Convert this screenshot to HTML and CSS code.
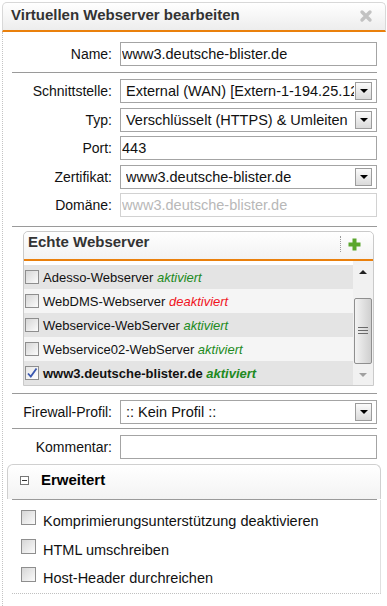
FILE: index.html
```html
<!DOCTYPE html>
<html lang="de">
<head>
  <meta charset="UTF-8">
  <title>Virtuellen Webserver bearbeiten</title>
  <link rel="stylesheet" href="styles.css">
</head>
<body>
  <div class="dialog">
    <div class="dialog-head">
      <span class="dialog-title">Virtuellen Webserver bearbeiten</span>
      <svg class="close" width="14" height="14" viewBox="0 0 14 14">
        <path d="M3 3 L11 11 M11 3 L3 11" stroke="#c2c2c2" stroke-width="3.4" stroke-linecap="round" fill="none"/>
      </svg>
    </div>

    <div class="dialog-body">
      <div class="form-grid">
        <label>Name:</label>
        <input class="field" type="text" value="www3.deutsche-blister.de">
      </div>

      <hr class="sep">

      <div class="form-grid">
        <label>Schnittstelle:</label>
        <div class="select"><span class="value">External (WAN) [Extern-1-194.25.12.80]</span><span class="arrow"></span></div>

        <label>Typ:</label>
        <div class="select"><span class="value">Verschlüsselt (HTTPS) &amp; Umleiten</span><span class="arrow"></span></div>

        <label>Port:</label>
        <input class="field" type="text" value="443">

        <label>Zertifikat:</label>
        <div class="select"><span class="value">www3.deutsche-blister.de</span><span class="arrow"></span></div>

        <label>Domäne:</label>
        <input class="field" type="text" value="www3.deutsche-blister.de" disabled>
      </div>

      <hr class="sep sep-before-panel">

      <div class="panel servers">
        <div class="panel-head">
          <span class="panel-title">Echte Webserver</span>
          <span class="panel-tools">
            <svg class="plus" width="15" height="15" viewBox="0 0 15 15">
              <path d="M7.5 1.5 V13.5 M1.5 7.5 H13.5" stroke="#5aa62c" stroke-width="4" fill="none"/>
            </svg>
          </span>
        </div>
        <div class="server-list">
          <div class="rows">
            <div class="row odd"><span class="cb"></span>Adesso-Webserver <em class="on">aktiviert</em></div>
            <div class="row"><span class="cb"></span>WebDMS-Webserver <em class="off">deaktiviert</em></div>
            <div class="row odd"><span class="cb"></span>Webservice-WebServer <em class="on">aktiviert</em></div>
            <div class="row"><span class="cb"></span>Webservice02-WebServer <em class="on">aktiviert</em></div>
            <div class="row odd selected">
              <span class="cb checked">
                <svg width="12" height="12" viewBox="0 0 12 12"><path d="M2 6.5 L4.8 9.5 L10.5 1.5" stroke="#3a58b0" stroke-width="1.8" fill="none"/></svg>
              </span>www3.deutsche-blister.de <em class="on">aktiviert</em>
            </div>
          </div>
          <div class="scrollbar">
            <span class="sb-btn"><span class="tri-up"></span></span>
            <span class="thumb">
              <svg width="10" height="8" viewBox="0 0 10 8"><path d="M0 0.5 H10 M0 3.5 H10 M0 6.5 H10" stroke="#6a6a6a" stroke-width="1"/></svg>
            </span>
            <span class="sb-btn sb-down"><span class="tri-down"></span></span>
          </div>
        </div>
      </div>

      <hr class="sep sep-after-panel">

      <div class="form-grid">
        <label>Firewall-Profil:</label>
        <div class="select"><span class="value">:: Kein Profil ::</span><span class="arrow"></span></div>
      </div>

      <hr class="sep sep-tight">

      <div class="form-grid">
        <label>Kommentar:</label>
        <input class="field" type="text" value="">
      </div>

      <div class="advanced">
        <div class="adv-head">
          <span class="toggle"></span>
          <span class="adv-title">Erweitert</span>
        </div>
        <div class="adv-line"></div>
        <div class="adv-body">
          <div class="option"><span class="cb big"></span><span class="opt-text">Komprimierungsunterstützung deaktivieren</span></div>
          <div class="option"><span class="cb big"></span><span class="opt-text">HTML umschreiben</span></div>
          <div class="option"><span class="cb big"></span><span class="opt-text">Host-Header durchreichen</span></div>
        </div>
      </div>
    </div>
  </div>
</body>
</html>
```

FILE: styles.css
```css
body {
  margin: 0;
  font-family: "Liberation Sans", Arial, sans-serif;
  background-color: #fff;
  color: #111;
}

.dialog {
  width: 384px;
  margin-left: 2px;
}

.dialog-head {
  margin-top: 2px;
  height: 27px;
  border: 1px solid #d8d8d8;
  border-bottom: 2px solid #ea800c;
  border-radius: 5px 5px 0 0;
  background: linear-gradient(#ffffff, #ededed);
  display: flex;
  justify-content: space-between;
  align-items: flex-start;
  padding: 0 12px 0 8px;
}

.dialog-title {
  padding-top: 3px;
  line-height: 18px;
  font-size: 15px;
  font-weight: bold;
  color: #333;
}

.close {
  margin-top: 6px;
}

.dialog-body {
  box-sizing: border-box;
  min-height: 574px;
  border-left: 1px dotted #c4c4c4;
  padding: 10px 9px 0 9px;
}

.form-grid {
  display: grid;
  grid-template-columns: 100px minmax(0, 1fr);
  column-gap: 8px;
  row-gap: 4.5px;
  align-items: center;
}

.form-grid label {
  text-align: right;
  font-size: 14px;
}

.field, .select {
  box-sizing: border-box;
  height: 24px;
  border: 1px solid #a4a4a4;
  background: #fff;
  font-family: "Liberation Sans", Arial, sans-serif;
  font-size: 14.5px;
  color: #111;
}

.field {
  width: 100%;
  padding: 0 1px;
  margin: 0;
}

.field:disabled {
  border-color: #d2d2d2;
  color: #b8b8b8;
}

.select {
  position: relative;
  min-width: 0;
  line-height: 22px;
  padding-left: 5px;
}

.select .value {
  display: block;
  overflow: hidden;
  white-space: nowrap;
  margin-right: 22px;
}

.select .arrow {
  position: absolute;
  right: 4px;
  top: 2px;
  width: 17px;
  height: 18px;
  box-sizing: border-box;
  border: 1px solid #9c9c9c;
  background: linear-gradient(#fbfbfb, #dadada);
}

.select .arrow::after {
  content: "";
  position: absolute;
  left: 4px;
  top: 6px;
  border-left: 4px solid transparent;
  border-right: 4px solid transparent;
  border-top: 4px solid #000;
}

.sep {
  border: 0;
  border-top: 1px solid #9a9a9a;
  margin: 6px 0;
}

.sep-before-panel {
  margin: 9px 0 4px;
}

.sep-after-panel {
  margin: 7px 0 6px;
}

.sep-tight {
  margin: 4px 0 6px;
}

.panel {
  border: 1px solid #cacaca;
  border-radius: 5px 5px 0 0;
}

.servers {
  margin: 0 3px 0 11px;
}

.panel-head {
  height: 27px;
  border-bottom: 2px solid #ea800c;
  border-radius: 5px 5px 0 0;
  background: linear-gradient(#ffffff, #f2f2f2);
  display: flex;
  justify-content: space-between;
  align-items: flex-start;
}

.panel-title {
  padding: 1px 0 0 4px;
  line-height: 18px;
  font-size: 15px;
  font-weight: bold;
  color: #333;
}

.panel-tools {
  margin: 4px 11px 0 0;
  padding-left: 6px;
  height: 16px;
  border-left: 1px dotted #9a9a9a;
}

.plus {
  display: block;
  margin-top: 1px;
}

.server-list {
  display: flex;
}

.rows {
  flex: 1;
  padding-top: 4px;
  background: #fff;
}

.row {
  height: 24px;
  display: flex;
  align-items: center;
  padding-left: 1px;
  font-size: 13px;
  white-space: pre;
  background: #f5f5f5;
}

.row.odd {
  background: #e4e4e4;
}

.row.selected {
  font-weight: bold;
}

.row .cb {
  margin-right: 4px;
}

em.on {
  color: #218a21;
}

em.off {
  color: #f0141e;
}

.cb {
  box-sizing: border-box;
  width: 14px;
  height: 14px;
  border: 1px solid #8e8e8e;
  background: linear-gradient(135deg, #d6d6d6, #fbfbfb);
  display: inline-flex;
  align-items: center;
  justify-content: center;
  flex-shrink: 0;
}

.cb.checked {
  background: linear-gradient(135deg, #e6e6e6, #ffffff);
}

.cb.big {
  width: 15px;
  height: 15px;
}

.scrollbar {
  width: 20px;
  background: #f1f1f1;
  display: flex;
  flex-direction: column;
  align-items: center;
}

.sb-btn {
  height: 22px;
  display: flex;
  align-items: center;
  justify-content: center;
}

.sb-down {
  flex: 1;
}

.tri-up {
  border-left: 4px solid transparent;
  border-right: 4px solid transparent;
  border-bottom: 4px solid #222;
}

.tri-down {
  border-left: 4px solid transparent;
  border-right: 4px solid transparent;
  border-top: 4px solid #a0a0a0;
}

.thumb {
  box-sizing: border-box;
  margin-top: 15px;
  width: 18px;
  height: 66px;
  border: 1px solid #8f8f8f;
  border-radius: 2px;
  background: linear-gradient(to right, #f3f3f3, #cfcfcf);
  display: flex;
  align-items: center;
  justify-content: center;
}

.advanced {
  margin: 5px -4px 0 -5px;
}

.adv-head {
  box-sizing: border-box;
  height: 35px;
  padding: 6px 0 0 12px;
  border: 1px solid #d0d0d0;
  border-bottom: 0;
  border-radius: 6px 6px 0 0;
  background: linear-gradient(#ffffff, #f3f3f3);
  display: flex;
  align-items: flex-start;
}

.toggle {
  position: relative;
  box-sizing: border-box;
  width: 9px;
  height: 9px;
  margin: 4.5px 12px 0 0;
  border: 1px solid #777;
  background: #fff;
}

.toggle::after {
  content: "";
  position: absolute;
  left: 1px;
  right: 1px;
  top: 3px;
  height: 1px;
  background: #333;
}

.adv-title {
  line-height: 18px;
  font-size: 15px;
  font-weight: bold;
  color: #000;
}

.adv-line {
  height: 1px;
  margin: 0 4px 0 5px;
  background: #9a9a9a;
}

.adv-body {
  margin-left: 5px;
  padding: 7px 0 0 9px;
  border-right: 1px solid #e0e0e0;
  border-bottom: 1px dotted #c0c0c0;
}

.option {
  height: 28.5px;
  display: flex;
  align-items: flex-start;
}

.option .cb {
  margin: 3px 7px 0 0;
}

.opt-text {
  margin-top: 5px;
  line-height: 18px;
  font-size: 14.5px;
}
```
